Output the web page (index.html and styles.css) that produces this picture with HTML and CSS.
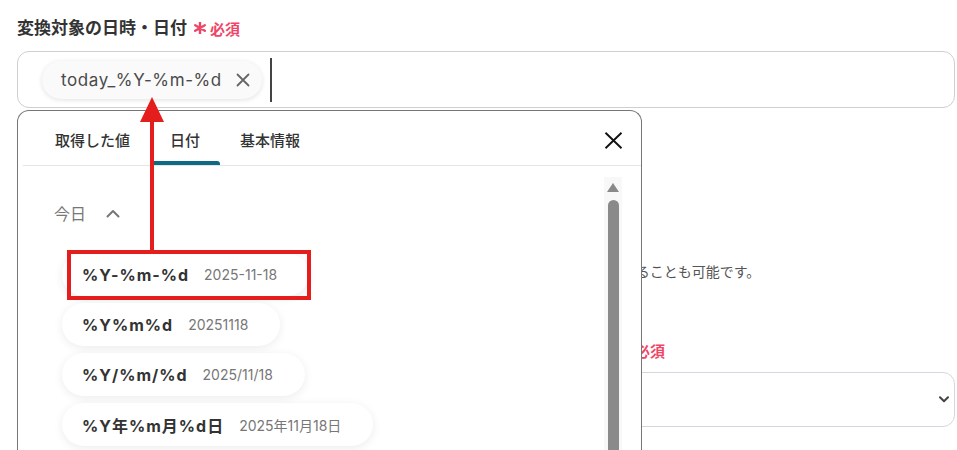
FILE: index.html
```html
<!DOCTYPE html>
<html lang="ja">
<head>
<meta charset="utf-8">
<link rel="stylesheet" href="styles.css">
</head>
<body>
<div class="page">
  <div class="field-label">
    <span class="label-text">変換対象の日時・日付</span>
    <svg class="req-mark" viewBox="0 0 12 12"><path d="M6 0.5V11.5M1.2 3.2L10.8 8.8M10.8 3.2L1.2 8.8" stroke="#ef4566" stroke-width="2.4" stroke-linecap="round"/></svg>
    <span class="req">必須</span>
  </div>
  <div class="input">
    <span class="chip">
      <span class="chip-text">today_%Y-%m-%d</span>
      <svg class="chip-x" viewBox="0 0 14 14"><path d="M1.5 1.5L12.5 12.5M12.5 1.5L1.5 12.5" stroke="#666" stroke-width="1.8" stroke-linecap="round"/></svg>
    </span>
    <span class="caret"></span>
  </div>
  <p class="desc">変換したい日時・日付を指定してください。取得した値を使用して任意の日付や時刻を直接設定することも可能です。</p>
  <div class="field-label second">
    <span class="label-text">変換後の日時・日付の表示形式（年月日や時刻の並び順、区切り文字など）を</span>
    <svg class="req-mark" viewBox="0 0 12 12"><path d="M6 0.5V11.5M1.2 3.2L10.8 8.8M10.8 3.2L1.2 8.8" stroke="#ef4566" stroke-width="2.4" stroke-linecap="round"/></svg>
    <span class="req">必須</span>
  </div>
  <div class="select">
    <svg class="select-chev" viewBox="0 0 10 7"><path d="M1 1.2L5 5.2L9 1.2" fill="none" stroke="#444" stroke-width="2" stroke-linecap="round" stroke-linejoin="round"/></svg>
  </div>
</div>

<div class="panel">
  <div class="panel-head">
    <div class="tab">取得した値</div>
    <div class="tab active">日付</div>
    <div class="tab">基本情報</div>
    <svg class="close" viewBox="0 0 19 17"><path d="M1.5 0.8L17.5 16.2M17.5 0.8L1.5 16.2" stroke="#111" stroke-width="1.9"/></svg>
  </div>
  <div class="panel-body">
    <div class="list">
      <div class="group-head">
        <span>今日</span>
        <svg class="group-chev" viewBox="0 0 14 9"><path d="M1.5 7.5L7 2L12.5 7.5" fill="none" stroke="#777" stroke-width="2" stroke-linecap="round" stroke-linejoin="round"/></svg>
      </div>
      <div class="items">
        <div class="item"><span class="item-key">%Y-%m-%d</span><span class="item-val">2025-11-18</span></div>
        <div class="item"><span class="item-key">%Y%m%d</span><span class="item-val">20251118</span></div>
        <div class="item"><span class="item-key">%Y/%m/%d</span><span class="item-val">2025/11/18</span></div>
        <div class="item"><span class="item-key">%Y年%m月%d日</span><span class="item-val">2025年11月18日</span></div>
      </div>
    </div>
    <div class="scrollbar">
      <div class="sb-up"></div>
      <div class="sb-thumb"></div>
    </div>
  </div>
</div>

<div class="annot-box"></div>
<svg class="annot-arrow" viewBox="0 0 26 156"><polygon points="13,1 1,26 25,26" fill="#e41d1d"/><rect x="11" y="24" width="4" height="132" fill="#e41d1d"/></svg>
</body>
</html>
```

FILE: styles.css
```css
body {
  margin: 0;
  width: 957px;
  height: 450px;
  overflow: hidden;
  position: relative;
  background: #fff;
  color: #333;
  font-family: Inter, "Noto Sans CJK JP", sans-serif;
}

.page {
  padding: 16px 2px 0 17px;
}

.field-label {
  display: flex;
  align-items: center;
  height: 24px;
  white-space: nowrap;
}

.label-text {
  font-size: 17px;
  font-weight: 700;
  line-height: 24px;
  color: #333;
}

.req-mark {
  width: 12px;
  height: 12px;
  margin-left: 7px;
  flex: none;
}

.req {
  font-size: 15px;
  font-weight: 700;
  color: #ef4566;
  margin-left: 4px;
}

.input {
  margin-top: 11px;
  height: 57px;
  box-sizing: border-box;
  border: 1px solid #cfcfcf;
  border-radius: 12px;
  display: flex;
  align-items: center;
  padding-left: 24px;
}

.chip {
  display: flex;
  align-items: center;
  height: 38px;
  border-radius: 19px;
  background: #fafafa;
  box-shadow: 0 1px 5px rgba(0, 0, 0, 0.12);
  padding: 0 12px 0 19px;
}

.chip-text {
  font-size: 17px;
  color: #4a4a4a;
  letter-spacing: 0.6px;
}

.chip-x {
  width: 14px;
  height: 14px;
  margin-left: 14px;
}

.caret {
  width: 2px;
  height: 44px;
  background: #444;
  margin-left: 8px;
}

.desc {
  margin: 154px 0 0 4px;
  font-size: 14px;
  line-height: 20px;
  color: #555;
  white-space: nowrap;
}

.field-label.second {
  margin-top: 56px;
}

.select {
  margin-top: 10px;
  height: 55px;
  box-sizing: border-box;
  border: 1px solid #d3d7de;
  border-radius: 12px;
  display: flex;
  align-items: center;
  justify-content: flex-end;
  padding-right: 5px;
}

.select-chev {
  width: 10px;
  height: 7px;
}

.panel {
  position: absolute;
  left: 17px;
  top: 110px;
  width: 625px;
  height: 420px;
  box-sizing: border-box;
  border: 1px solid #767676;
  border-bottom: none;
  border-radius: 12px 12px 0 0;
  background: #fff;
  display: flex;
  flex-direction: column;
}

.panel-head {
  display: flex;
  align-items: flex-start;
  margin-left: 5px;
  height: 55px;
  box-sizing: border-box;
  border-bottom: 1px solid #e5e5e5;
  padding-left: 12px;
}

.tab {
  position: relative;
  height: 54px;
  box-sizing: border-box;
  padding: 20px 20px 0;
  font-size: 15px;
  line-height: 20px;
  font-weight: 500;
  color: #333;
}

.tab.active::after {
  content: "";
  position: absolute;
  left: 0;
  right: 0;
  bottom: 0;
  height: 4px;
  background: #0f6884;
  border-radius: 3px 3px 0 0;
}

.close {
  margin-left: auto;
  margin-top: 21px;
  margin-right: 18px;
  width: 19px;
  height: 17px;
}

.panel-body {
  display: flex;
  flex: 1;
}

.list {
  flex: 1;
  padding: 35px 0 0 36px;
}

.group-head {
  display: flex;
  align-items: center;
  height: 24px;
  font-size: 16px;
  color: #777;
}

.group-chev {
  width: 14px;
  height: 9px;
  margin-left: 20px;
}

.items {
  display: flex;
  flex-direction: column;
  align-items: flex-start;
  gap: 7px;
  margin-top: 28px;
  margin-left: 8px;
}

.item {
  height: 43px;
  display: flex;
  align-items: center;
  padding: 0 32px 0 20px;
  border-radius: 22px;
  background: #fff;
  box-shadow: 0 2px 10px rgba(0, 0, 0, 0.08);
  white-space: nowrap;
}

.item-key {
  font-size: 16px;
  font-weight: 700;
  color: #333;
  letter-spacing: 1px;
}

.item-val {
  font-size: 14px;
  color: #777;
  margin-left: 15px;
}

.scrollbar {
  width: 18px;
  margin: 11px 19px 0 0;
  background: #f8f8f8;
  display: flex;
  flex-direction: column;
  align-items: center;
}

.sb-up {
  margin-top: 6px;
  width: 0;
  height: 0;
  border-left: 6px solid transparent;
  border-right: 6px solid transparent;
  border-bottom: 9px solid #8a8a8a;
}

.sb-thumb {
  margin-top: 8px;
  width: 11px;
  flex: 1;
  background: #8a8a8a;
  border-radius: 6px 6px 0 0;
}

.annot-box {
  position: absolute;
  left: 67px;
  top: 250px;
  width: 244px;
  height: 50px;
  box-sizing: border-box;
  border: 4px solid #e41d1d;
}

.annot-arrow {
  position: absolute;
  left: 139px;
  top: 96px;
  width: 26px;
  height: 156px;
}
```
